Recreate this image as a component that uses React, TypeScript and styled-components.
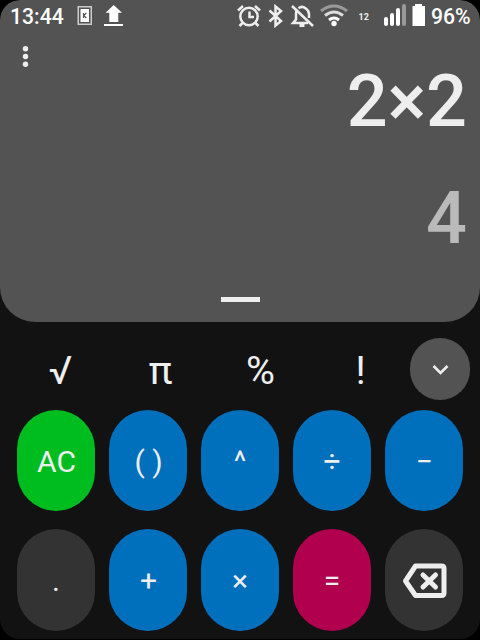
import React from "react";
import styled, { createGlobalStyle } from "styled-components";

const GlobalStyle = createGlobalStyle`
  * { box-sizing: border-box; }
  body { margin: 0; background: #000; font-family: Roboto, "Liberation Sans", sans-serif; }
`;

const Screen = styled.main`
  width: 480px;
  height: 639px;
  display: flex;
  flex-direction: column;
  overflow: hidden;
  background: #121212;
  border-radius: 20px;
  color: #eee;
`;

const Display = styled.section`
  height: 322px;
  flex: none;
  display: flex;
  flex-direction: column;
  background: #535353;
  border-radius: 20px 20px 35px 35px;
`;

const StatusBar = styled.header`
  height: 32px;
  display: flex;
  justify-content: space-between;
  color: #fff;
`;

const Time = styled.span`
  padding: 4px 0 0 10px;
  width: 73px;
  font-size: 21.2px;
  line-height: 25px;
  font-weight: 500;
`;

const Battery = styled.span`
  padding-top: 4px;
  width: 49px;
  font-size: 21.2px;
  line-height: 25px;
  font-weight: 500;
`;

const StatusGroup = styled.div`
  display: flex;
`;

const StatusIcon = styled.svg`
  display: block;
  flex: none;
`;

const Menu = styled.button`
  width: 51px;
  height: 38px;
  padding: 13px 0 0 22px;
  border: 0;
  background: none;
  display: flex;
`;

const Expression = styled.div`
  height: 84px;
  margin-top: -10px;
  padding-right: 13px;
  text-align: right;
  font-size: 72px;
  line-height: 84px;
  font-weight: 500;
`;

const Result = styled(Expression)`
  margin-top: 33px;
  color: #bababa;
`;

const Handle = styled.div`
  width: 39px;
  height: 5px;
  margin: auto auto 20px;
  background: #eee;
`;

const FunctionRow = styled.nav`
  height: 88px;
  flex: none;
  padding: 16px 10px 10px;
  display: flex;
`;

const FunctionKey = styled.button`
  width: 100px;
  height: 62px;
  padding: 2px 0 0 1px;
  border: 0;
  background: none;
  color: #eee;
  font-family: inherit;
  font-size: 39.5px;
  line-height: 62px;
`;

const Collapse = styled.button`
  width: 60px;
  height: 62px;
  padding: 2px 0 0;
  border: 0;
  border-radius: 30px;
  background: #535353;
  display: grid;
  place-items: center;
`;

const Keypad = styled.section`
  display: grid;
  grid-template-columns: repeat(5, 78px);
  grid-template-rows: 101px 102px;
  gap: 18px 14px;
  padding: 0 17px;
`;

const Key = styled.button<{ $tone: string; $top?: number; $left?: number }>`
  padding: ${(p) => p.$top ?? 2}px 0 0 ${(p) => p.$left ?? 0}px;
  border: 0;
  border-radius: 39px;
  background: ${(p) => p.$tone};
  color: #eee;
  font-family: inherit;
  font-size: 30px;
  display: flex;
  align-items: center;
  justify-content: center;
`;

const blue = "#0070bd";
const gray = "#333";

const keys = [
  { label: "AC", tone: "#00bd1f", left: 1 },
  { label: "( )", tone: blue, left: 1 },
  { label: "^", tone: blue },
  { label: "÷", tone: blue },
  { label: "−", tone: blue },
  { label: ".", tone: gray, top: 0 },
  { label: "+", tone: blue, top: 0, left: 1 },
  { label: "×", tone: blue, top: 0 },
  { label: "=", tone: "#b0004e", top: 0 },
];

function NotificationIcons() {
  return (
    <StatusIcon width="52" height="32" viewBox="73 0 52 32" fill="none" stroke="#fff">
      <rect x="78.250" y="6.750" width="13" height="17.500" stroke="#ccc" strokeWidth="1.500" />
      <rect x="80.500" y="9" width="8.500" height="13" fill="#fff" stroke="none" />
      <path d="M83.500 13v5M86.300 13l-2.500 2.500 2.500 2.500" stroke="#555" strokeWidth="1.200" />
      <path d="M113.700 5L122 12.800H118.300V22H109.300V12.800H105.500z" fill="#fff" stroke="none" />
      <path d="M104 25h19" strokeWidth="2" />
    </StatusIcon>
  );
}

function SystemIcons() {
  return (
    <StatusIcon width="195" height="32" fill="none" stroke="#eee" strokeWidth="2.500">
      <circle cx="13" cy="16.500" r="8.700" />
      <path d="M13.500 11.500v5.500H18M2 10.500l5-4.500M24 10.500l-5-4.500M6.500 23l-3 3M19.500 23l3 3" />
      <path d="M33.500 10.500l11.500 10.500-5.500 4.500V6.500l5.500 4.500-11.500 10.500" />
      <path d="M72 23H57l3-3.500V14q0-3 1.500-4.500M62.500 8.300Q66 5.500 69.500 8.300 73 10.500 73 14v4" />
      <path d="M63.500 25.500h5" strokeWidth="3" />
      <path d="M56 6l21 20" />
      <path d="M85 11q13-10 26 0" stroke="#9a9a9a" strokeWidth="3" />
      <path d="M89 15.500q9-7 18 0" stroke="#ddd" strokeWidth="3" />
      <path d="M93 20q5-4 10 0" stroke="#fff" strokeWidth="3" />
      <circle cx="98" cy="23.500" r="2.700" fill="#fff" stroke="none" />
      <text x="122.500" y="20" fill="#eee" stroke="none" fontSize="9" fontWeight="700" fontFamily="Roboto">12</text>
      <g strokeWidth="4" strokeLinecap="round" stroke="#fff">
        <path d="M150 19v5M156 15v9M162 10v14" />
        <path d="M168 6v18" stroke="#9a9a9a" />
      </g>
      <path d="M179 4h7v2h3v20h-12.500V6h2.500z" fill="#fff" stroke="none" />
    </StatusIcon>
  );
}

export default function App() {
  return (
    <>
      <GlobalStyle />
      <Screen>
        <Display>
          <StatusBar>
            <StatusGroup>
              <Time>13:44</Time>
              <NotificationIcons />
            </StatusGroup>
            <StatusGroup>
              <SystemIcons />
              <Battery>96%</Battery>
            </StatusGroup>
          </StatusBar>
          <Menu aria-label="Menu">
            <svg width="7" height="23" fill="#eee">
              <circle cx="3.500" cy="3.700" r="2.700" />
              <circle cx="3.500" cy="11.500" r="2.700" />
              <circle cx="3.500" cy="19.200" r="2.700" />
            </svg>
          </Menu>
          <Expression>2×2</Expression>
          <Result>4</Result>
          <Handle />
        </Display>
        <FunctionRow>
          <FunctionKey>√</FunctionKey>
          <FunctionKey>π</FunctionKey>
          <FunctionKey>%</FunctionKey>
          <FunctionKey>!</FunctionKey>
          <Collapse aria-label="Collapse">
            <svg width="18" height="12" fill="none" stroke="#eee" strokeWidth="2.600">
              <path d="M2.500 2l7 7 7-7" />
            </svg>
          </Collapse>
        </FunctionRow>
        <Keypad>
          {keys.map((k) => (
            <Key key={k.label} $tone={k.tone} $top={k.top} $left={k.left}>{k.label}</Key>
          ))}
          <Key $tone={gray} $top={1} aria-label="Backspace">
            <svg width="46" height="36" fill="none" stroke="#eee" strokeWidth="5" strokeLinejoin="round" strokeLinecap="round">
              <path d="M14.500 3H40.500Q43 3 43 5.500V30Q43 32.500 40.500 32.500H14.500L4.500 18z" />
              <path d="M22 12l12.500 12M34.500 12L22 24" />
            </svg>
          </Key>
        </Keypad>
      </Screen>
    </>
  );
}
